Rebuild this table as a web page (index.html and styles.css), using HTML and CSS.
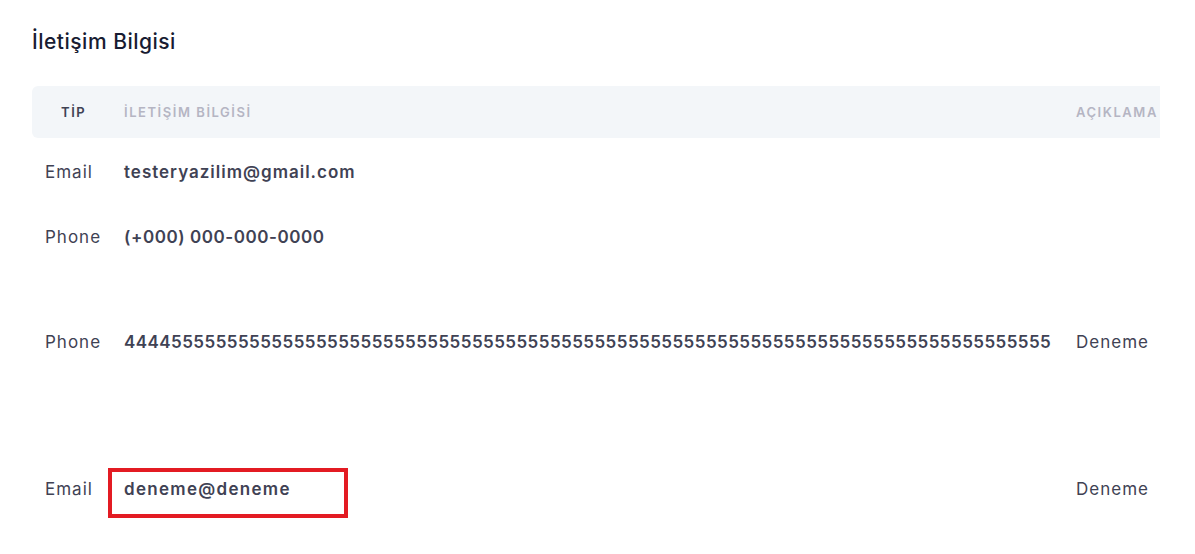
FILE: index.html
```html
<!DOCTYPE html>
<html lang="tr">
<head>
<meta charset="utf-8">
<link rel="stylesheet" href="styles.css">
</head>
<body>
<div class="card">
  <h3 class="title">İletişim Bilgisi</h3>
  <div class="table-wrap">
    <div class="table">
      <div class="row head">
        <div class="c1 th th-dark">TİP</div>
        <div class="c2 th">İLETİŞİM BİLGİSİ</div>
        <div class="c3 th">AÇIKLAMA</div>
      </div>
      <div class="row r1">
        <div class="c1 td">Email</div>
        <div class="c2 td strong">testeryazilim@gmail.com</div>
        <div class="c3 td"></div>
      </div>
      <div class="row r2">
        <div class="c1 td">Phone</div>
        <div class="c2 td strong phone">(+000) 000-000-0000</div>
        <div class="c3 td"></div>
      </div>
      <div class="row r3">
        <div class="c1 td">Phone</div>
        <div class="c2 td strong long">44445555555555555555555555555555555555555555555555555555555555555555555555555555555</div>
        <div class="c3 td">Deneme</div>
      </div>
      <div class="row r4">
        <div class="c1 td">Email</div>
        <div class="c2 td strong marked">deneme@deneme<span class="highlight"></span></div>
        <div class="c3 td">Deneme</div>
      </div>
    </div>
  </div>
</div>
</body>
</html>
```
FILE: styles.css
```css
html, body {
  margin: 0;
  padding: 0;
  background: #ffffff;
}
body {
  font-family: "Inter", "Open Sans", sans-serif;
  color: #3f4254;
  width: 1195px;
  height: 554px;
  overflow: hidden;
}
.card {
  padding: 27px 0 0 32px;
}
.title {
  margin: 0;
  font-size: 21px;
  font-weight: 500;
  color: #181c32;
  line-height: 30px;
  letter-spacing: 0.5px;
}
.table-wrap {
  margin-top: 29px;
  width: 1128px;
  overflow: hidden;
}
.table {
  width: 1300px;
}
.row {
  display: grid;
  grid-template-columns: 92px 952px 1fr;
  align-items: center;
}
.head {
  height: 52px;
  background: #f3f6f9;
  border-radius: 6px 0 0 6px;
}
.th {
  font-size: 13px;
  font-weight: 600;
  letter-spacing: 1.55px;
  color: #b5b5c3;
  text-transform: uppercase;
}
.th-dark {
  color: #3f4254;
  padding-left: 29px;
}
.c1.td {
  padding-left: 13px;
}
.td {
  font-size: 17px;
  line-height: 20px;
  font-weight: 400;
  letter-spacing: 1px;
  color: #3f4254;
}
.strong {
  font-weight: 600;
  color: #3f4254;
}
.phone {
  letter-spacing: 0.55px;
}
.marked {
  letter-spacing: 1.3px;
}
.long {
  white-space: nowrap;
  letter-spacing: 0.45px;
}
.r1 { height: 68px; }
.r2 { height: 62px; }
.r3 { height: 147px; }
.r4 { height: 148px; }
.marked {
  position: relative;
}
.highlight {
  position: absolute;
  left: -16px;
  top: -11px;
  width: 232px;
  height: 42px;
  border: 4px solid #e31b23;
}
```
